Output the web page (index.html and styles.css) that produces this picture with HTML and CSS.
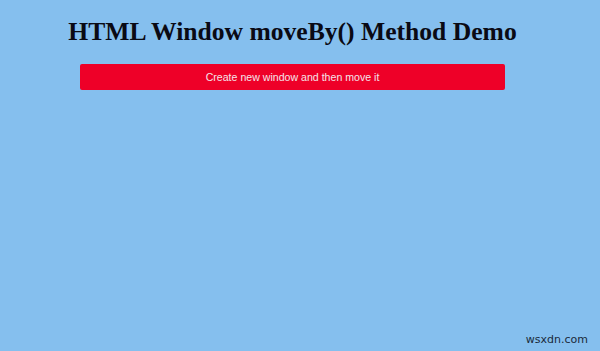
FILE: index.html
```html
<!DOCTYPE html>
<html lang="en">
<head>
<meta charset="UTF-8">
<meta name="viewport" content="width=device-width, initial-scale=1.0">
<title>HTML Window moveBy() Method Demo</title>
<link rel="stylesheet" href="styles.css">
</head>
<body>
<div class="container">
  <h1>HTML Window moveBy() Method Demo</h1>
  <button id="move-button">Create new window and then move it</button>
</div>
<span class="watermark">wsxdn.com</span>
</body>
</html>
```

FILE: styles.css
```css
html, body {
  height: 100%;
}
body {
  margin: 0;
  background-color: #85bfee;
  font-family: "Liberation Serif", "Times New Roman", serif;
  position: relative;
}
.container {
  width: 585px;
  display: flex;
  flex-direction: column;
  align-items: center;
}
h1 {
  margin: 17px 0 0;
  font-size: 25.6px;
  font-weight: bold;
  color: #0a0a14;
  line-height: 30px;
}
#move-button {
  margin-top: 17px;
  width: 425px;
  height: 26px;
  border: none;
  border-radius: 2px;
  background-color: #ee0028;
  color: #f4e4ea;
  font-family: "Liberation Sans", Arial, sans-serif;
  font-size: 10.6px;
  cursor: pointer;
}
.watermark {
  position: absolute;
  right: 12px;
  bottom: 5px;
  font-family: "DejaVu Sans", Verdana, sans-serif;
  font-size: 11px;
  color: #1a2a3a;
}
```
